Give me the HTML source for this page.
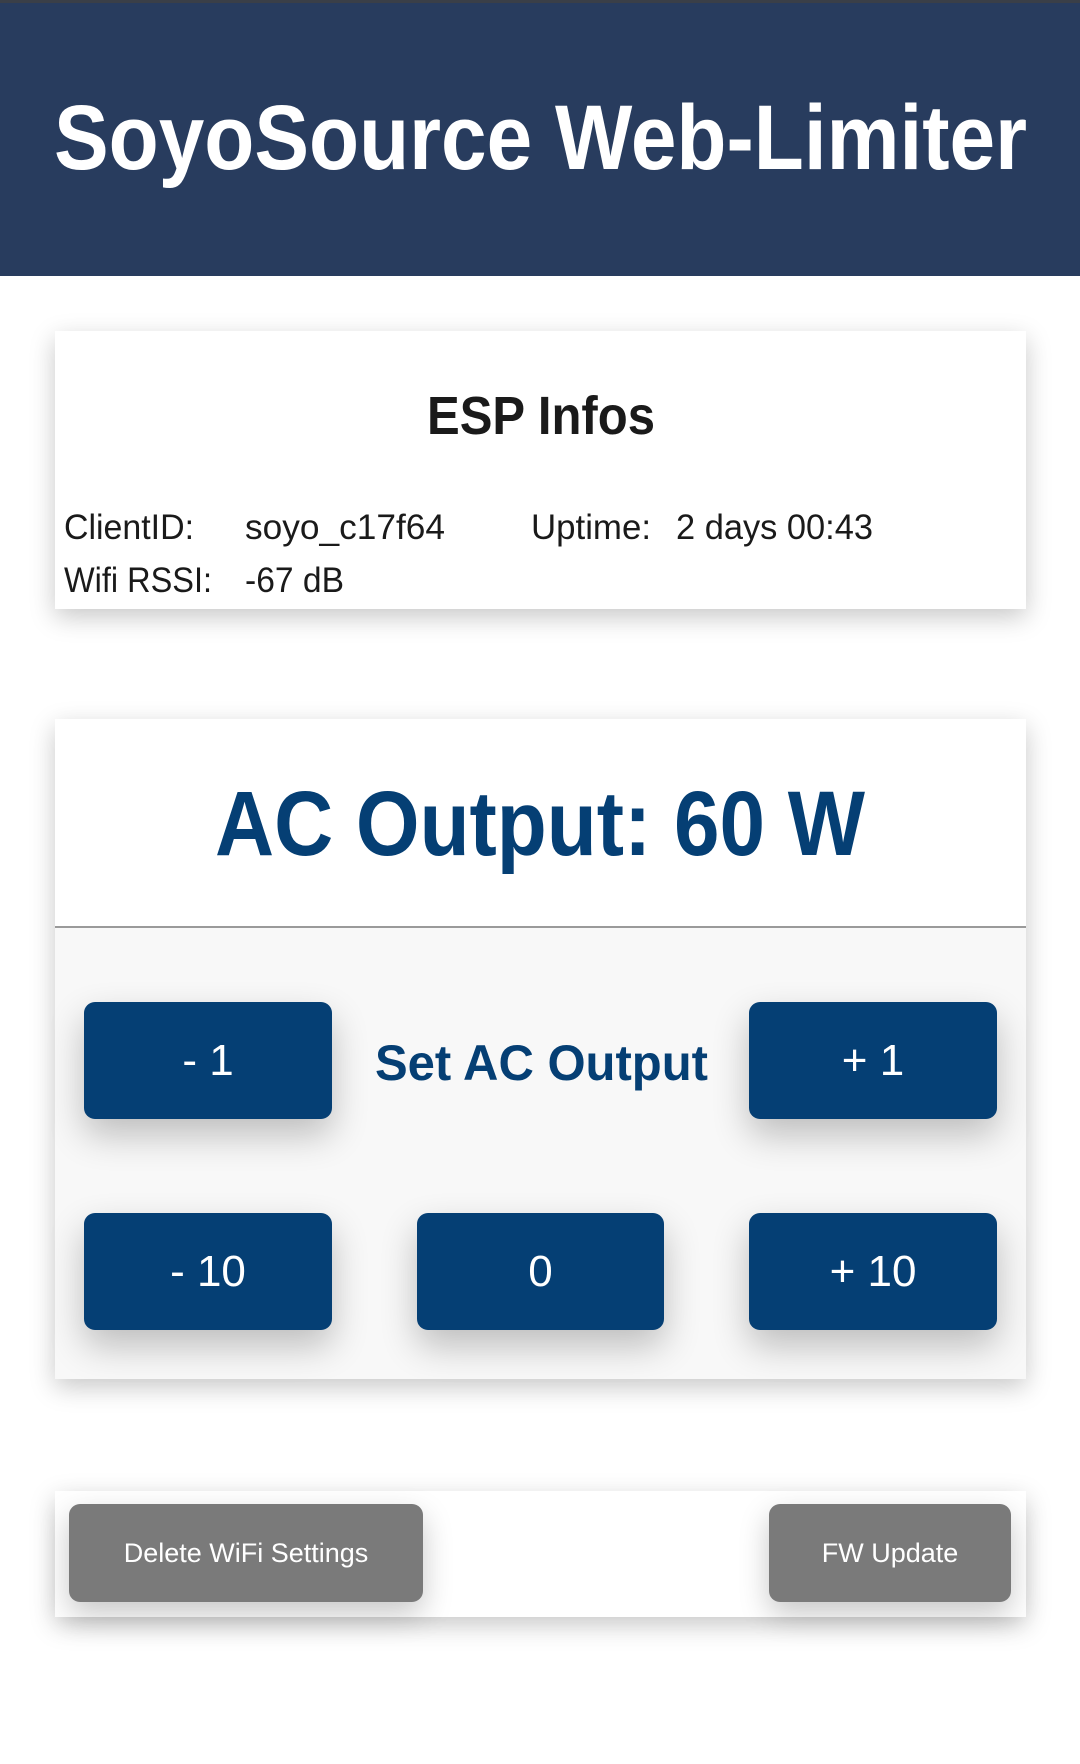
<!DOCTYPE html>
<html><head><meta charset="utf-8"><style>
*{margin:0;padding:0;box-sizing:border-box}
html,body{width:1080px;height:1764px;overflow:hidden}
body{background:#fff;font-family:"Liberation Sans",sans-serif;position:relative}
.abs{position:absolute}
.hdr{left:0;top:0;width:1080px;height:276px;background:#283c5e;border-top:3px solid #3a3f48}
.card{background:#fff;box-shadow:0 8px 24px rgba(0,0,0,.22)}
.btn{position:absolute;background:#053f74;border-radius:11px;color:#fff;font-size:44px;display:flex;align-items:center;justify-content:center;box-shadow:0 16px 36px rgba(0,0,0,.24)}
.gbtn{position:absolute;background:#7a7a7a;border-radius:11px;color:#fff;font-size:27px;display:flex;align-items:center;justify-content:center;box-shadow:0 12px 30px rgba(0,0,0,.22)}
svg{position:absolute;left:0;top:0;overflow:hidden}
</style></head><body>
<div class="abs hdr"></div>
<div class="abs card" style="left:55px;top:331px;width:971px;height:278px"></div>
<div class="abs card" style="left:55px;top:719px;width:971px;height:660px;background:#f8f8f8"></div>
<div class="abs" style="left:55px;top:719px;width:971px;height:209px;background:#fff;border-bottom:2px solid #9a9a9a"></div>
<div class="btn" style="left:84px;top:1002px;width:248px;height:117px">- 1</div>
<div class="btn" style="left:749px;top:1002px;width:248px;height:117px">+ 1</div>
<div class="btn" style="left:84px;top:1213px;width:248px;height:117px">- 10</div>
<div class="btn" style="left:417px;top:1213px;width:247px;height:117px">0</div>
<div class="btn" style="left:749px;top:1213px;width:248px;height:117px">+ 10</div>
<div class="abs card" style="left:55px;top:1491px;width:971px;height:126px"></div>
<div class="gbtn" style="left:69px;top:1504px;width:354px;height:98px">Delete WiFi Settings</div>
<div class="gbtn" style="left:769px;top:1504px;width:242px;height:98px">FW Update</div>
<svg width="1080" height="1764">
<g font-family="Liberation Sans, sans-serif">
<text x="54" y="169" font-size="92" font-weight="bold" fill="#fff" textLength="973" lengthAdjust="spacingAndGlyphs">SoyoSource Web-Limiter</text>
<text x="427" y="434" font-size="54" font-weight="bold" fill="#1a1a1a" textLength="228" lengthAdjust="spacingAndGlyphs">ESP Infos</text>
<g font-size="35" fill="#1a1a1a">
<text x="64" y="539" textLength="130" lengthAdjust="spacingAndGlyphs">ClientID:</text>
<text x="245" y="539" textLength="200" lengthAdjust="spacingAndGlyphs">soyo_c17f64</text>
<text x="531" y="539" textLength="120" lengthAdjust="spacingAndGlyphs">Uptime:</text>
<text x="676" y="539" textLength="197" lengthAdjust="spacingAndGlyphs">2 days 00:43</text>
<text x="64" y="592" textLength="148" lengthAdjust="spacingAndGlyphs">Wifi RSSI:</text>
<text x="245" y="592" textLength="99" lengthAdjust="spacingAndGlyphs">-67 dB</text>
</g>
<text x="215" y="855" font-size="92" font-weight="bold" fill="#053f74" textLength="650" lengthAdjust="spacingAndGlyphs">AC Output: 60 W</text>
<text x="375" y="1080" font-size="50" font-weight="bold" fill="#053f74" textLength="333" lengthAdjust="spacingAndGlyphs">Set AC Output</text>
</g>
</svg>
</body></html>
